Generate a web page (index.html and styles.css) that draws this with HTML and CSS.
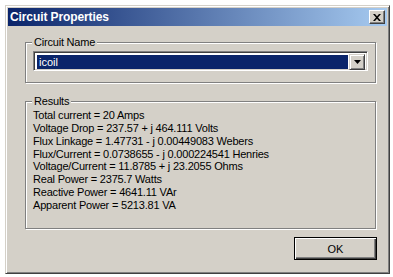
FILE: index.html
```html
<!DOCTYPE html>
<html>
<head>
<meta charset="utf-8">
<link rel="stylesheet" href="styles.css">
</head>
<body>
<div class="window">
  <div class="titlebar">
    <span class="title">Circuit Properties</span>
    <span class="close"><svg width="8" height="7" viewBox="0 0 8 7"><path d="M0 0h2l2 2.2L6 0h2L5 3.5 8 7H6L4 4.8 2 7H0l3-3.5z" fill="#000"/></svg></span>
  </div>
  <div class="body">
    <div class="group g1">
      <span class="legend">Circuit Name</span>
      <div class="combo">
        <div class="combo-field"><span class="sel">icoil</span></div>
        <span class="drop"><svg width="7" height="4" viewBox="0 0 7 4"><path d="M0 0h7L3.5 4z" fill="#000"/></svg></span>
      </div>
    </div>
    <div class="group g2">
      <span class="legend">Results</span>
      <div class="lines">
        <div>Total current = 20 Amps</div>
        <div>Voltage Drop = 237.57 + j 464.111 Volts</div>
        <div>Flux Linkage = 1.47731 - j 0.00449083 Webers</div>
        <div>Flux/Current = 0.0738655 - j 0.000224541 Henries</div>
        <div>Voltage/Current = 11.8785 + j 23.2055 Ohms</div>
        <div>Real Power = 2375.7 Watts</div>
        <div>Reactive Power = 4641.11 VAr</div>
        <div>Apparent Power = 5213.81 VA</div>
      </div>
    </div>
    <div class="actions"><span class="ok">OK</span></div>
  </div>
</div>
</body>
</html>
```
FILE: styles.css
```css
html, body { margin: 0; padding: 0; background: #fff; }
body { width: 393px; height: 277px; overflow: hidden; font-family: "Liberation Sans", Arial, sans-serif; font-size: 11px; color: #000; }
.window {
  margin: 5px 0 0 5px;
  width: 385px; height: 269px; box-sizing: border-box;
  background: #d4d0c8;
  border-style: solid; border-width: 1px;
  border-color: #d4d0c8 #404040 #404040 #d4d0c8;
  box-shadow: inset 1px 1px 0 #fff, inset -1px -1px 0 #808080;
  padding: 2px;
  display: flex; flex-direction: column;
}
.titlebar {
  height: 18px; flex: none;
  background: linear-gradient(to right, #0a246a, #a6caf0);
  display: flex; align-items: center; justify-content: space-between;
  padding: 0 2px 0 2px;
}
.title { color: #fff; font-weight: bold; font-size: 12px; letter-spacing: -0.1px; }
.close {
  width: 16px; height: 14px; box-sizing: border-box; background: #d4d0c8;
  border: 1px solid; border-color: #fff #404040 #404040 #fff;
  box-shadow: inset -1px -1px 0 #808080;
  display: flex; align-items: center; justify-content: center;
}
.body { flex: 1; padding: 16px 10px 0 17px; display: flex; flex-direction: column; }
.group {
  border: 1px solid #808080; box-shadow: 1px 1px 0 #fff, inset 1px 1px 0 #fff;
  box-sizing: border-box; width: 351px; padding: 0 7px;
}
.legend { display: block; width: max-content; background: #d4d0c8; padding: 0 2px; margin-left: -1px; height: 13px; line-height: 13px; margin-top: -7px; letter-spacing: -0.2px; }
.g1 { height: 41px; }
.g2 { height: 128px; margin-top: 18px; }
.combo {
  margin-top: 2px; height: 20px; box-sizing: border-box;
  border: 1px solid; border-color: #808080 #fff #fff #808080;
  box-shadow: inset 1px 1px 0 #404040, inset -1px -1px 0 #d4d0c8;
  background: #fff; padding: 2px; display: flex;
}
.combo-field { flex: 1; padding: 1px; }
.sel { display: block; height: 14px; line-height: 14px; background: #0a246a; color: #fff; padding-left: 2px; }
.drop {
  width: 16px; height: 16px; box-sizing: border-box; flex: none; background: #d4d0c8;
  border: 1px solid; border-color: #d4d0c8 #404040 #404040 #d4d0c8;
  box-shadow: inset 1px 1px 0 #fff, inset -1px -1px 0 #808080;
  display: flex; align-items: center; justify-content: center;
}
.lines { padding-top: 1px; line-height: 12.86px; letter-spacing: -0.2px; }
.actions { display: flex; justify-content: flex-end; margin-top: 8px; }
.ok {
  width: 83px; height: 23px; box-sizing: border-box;
  border: 1px solid #000; box-shadow: inset 1px 1px 0 #fff, inset -1px -1px 0 #404040, inset -2px -2px 0 #808080;
  display: flex; align-items: center; justify-content: center;
}
```
